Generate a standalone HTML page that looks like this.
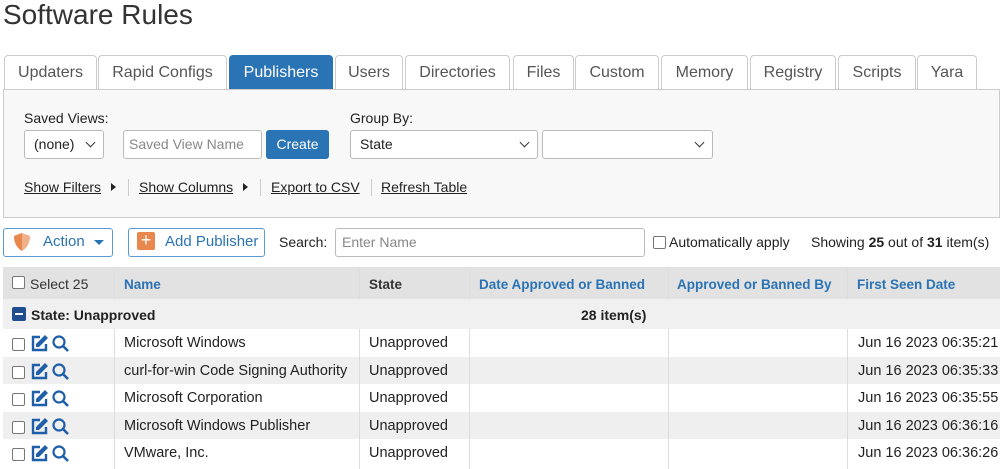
<!DOCTYPE html><html><head><style>
body{margin:0;width:1000px;height:469px;overflow:hidden;background:#fff;font-family:"Liberation Sans",sans-serif;color:#222;position:relative}
.a{position:absolute}
.tab{position:absolute;top:55px;height:33px;border:1px solid #ccc;border-bottom:none;border-radius:4px 4px 0 0;background:#fff;color:#555;font-size:16px;line-height:33px;text-align:center}
.tab.on{background:#2a73b5;color:#fff;border-color:#2a73b5}
.sel{position:absolute;height:27px;border:1px solid #bbb;border-radius:3px;background:#fff;font-size:14px;line-height:27px;padding-left:9px;box-sizing:border-box}
.sel:after{content:"";position:absolute;right:9px;top:8px;width:6px;height:6px;border-right:1.5px solid #333;border-bottom:1.5px solid #333;transform:rotate(45deg)}
.lnk{position:absolute;top:179px;font-size:14px;color:#222;text-decoration:underline}
.sep{position:absolute;top:179px;width:1px;height:17px;background:#ccc}
.row{position:absolute;left:3px;width:997px;font-size:14px}
.cb{position:absolute;width:11px;height:11px;border:1px solid #777;border-radius:2px;background:#fff}
.vl{position:absolute;width:1px;background:#ddd}
.h{position:absolute;top:277px;font-size:13.5px;font-weight:bold;color:#2a73b5;white-space:nowrap}
.t{position:absolute;top:0;font-size:14.5px;white-space:nowrap}
</style></head><body>
<div class="a" style="left:3px;top:-1px;font-size:28px;color:#333">Software Rules</div>
<div class="a" style="left:3px;top:89px;width:995px;height:127px;background:#f8f8f8;border:1px solid #ccc"></div>
<div class="tab" style="left:4px;width:91px">Updaters</div>
<div class="tab" style="left:98px;width:127px">Rapid Configs</div>
<div class="tab on" style="left:229px;width:102px">Publishers</div>
<div class="tab" style="left:335px;width:66px">Users</div>
<div class="tab" style="left:405px;width:103px">Directories</div>
<div class="tab" style="left:513px;width:59px">Files</div>
<div class="tab" style="left:575px;width:82px">Custom</div>
<div class="tab" style="left:661px;width:85px">Memory</div>
<div class="tab" style="left:750px;width:84px">Registry</div>
<div class="tab" style="left:838px;width:76px">Scripts</div>
<div class="tab" style="left:917px;width:58px">Yara</div>
<div class="a" style="left:24px;top:110px;font-size:14px">Saved Views:</div>
<div class="a" style="left:350px;top:110px;font-size:14px">Group By:</div>
<div class="sel" style="left:24px;top:130px;width:80px;height:29px;line-height:27px">(none)</div>
<div class="a" style="left:123px;top:130px;width:139px;height:29px;border:1px solid #bbb;border-radius:3px;background:#fff;box-sizing:border-box;font-size:14px;color:#888;line-height:27px;padding-left:5px">Saved View Name</div>
<div class="a" style="left:266px;top:130px;width:63px;height:29px;background:#2a73b5;border-radius:3px;color:#fff;font-size:14px;line-height:29px;text-align:center">Create</div>
<div class="sel" style="left:350px;top:130px;width:188px;height:29px">State</div>
<div class="sel" style="left:542px;top:130px;width:171px;height:29px"></div>
<div class="lnk" style="left:24px">Show Filters</div><div class="a" style="left:111px;top:183px;border-left:5px solid #222;border-top:4px solid transparent;border-bottom:4px solid transparent"></div>
<div class="sep" style="left:128px"></div>
<div class="lnk" style="left:139px">Show Columns</div><div class="a" style="left:243px;top:183px;border-left:5px solid #222;border-top:4px solid transparent;border-bottom:4px solid transparent"></div>
<div class="sep" style="left:260px"></div>
<div class="lnk" style="left:271px">Export to CSV</div>
<div class="sep" style="left:371px"></div>
<div class="lnk" style="left:381px">Refresh Table</div>
<div class="a" style="left:3px;top:228px;width:108px;height:27px;border:1px solid #5b9bd5;border-radius:3px;background:#fff"></div>
<svg class="a" style="left:12px;top:232px" width="20" height="20" viewBox="0 0 20 20"><path d="M10 1 L18 4 C18 11 15 16 10 19 C5 16 2 11 2 4 Z" fill="#f0b089"/><path d="M10 1 L2 4 C2 11 5 16 10 19 Z" fill="#e8874e"/></svg>
<div class="a" style="left:43px;top:233px;font-size:15px;color:#2a73b5">Action</div>
<div class="a" style="left:94px;top:240px;border-top:5px solid #2a73b5;border-left:5px solid transparent;border-right:5px solid transparent"></div>
<div class="a" style="left:128px;top:228px;width:135px;height:27px;border:1px solid #5b9bd5;border-radius:3px;background:#fff"></div>
<div class="a" style="left:137px;top:232px;width:18px;height:18px;background:#e8874e;border-radius:2px;color:#fff;font-size:18px;line-height:17px;text-align:center">+</div>
<div class="a" style="left:165px;top:233px;font-size:15px;color:#2a73b5">Add Publisher</div>
<div class="a" style="left:279px;top:234px;font-size:14px">Search:</div>
<div class="a" style="left:335px;top:228px;width:310px;height:29px;border:1px solid #bbb;border-radius:3px;box-sizing:border-box;font-size:14px;color:#888;line-height:27px;padding-left:6px">Enter Name</div>
<div class="cb" style="left:653px;top:236px"></div>
<div class="a" style="left:669px;top:234px;font-size:14px">Automatically apply</div>
<div class="a" style="left:811px;top:234px;font-size:14px">Showing <b>25</b> out of <b>31</b> item(s)</div>
<div class="row" style="top:267px;height:32px;background:#e2e2e2"></div>
<div class="cb" style="left:12px;top:276px"></div>
<div class="a" style="left:30px;top:276px;font-size:14px;color:#333">Select 25</div>
<div class="h" style="left:124px">Name</div>
<div class="h" style="left:369px;color:#333">State</div>
<div class="h" style="left:479px">Date Approved or Banned</div>
<div class="h" style="left:677px">Approved or Banned By</div>
<div class="h" style="left:857px">First Seen Date</div>
<div class="row" style="top:299px;height:30px;background:#f0f0f0"></div>
<div class="a" style="left:12px;top:307px;width:14px;height:14px;background:#1f4f8f;border-radius:2px"><div style="margin:6px 3px;height:2px;background:#fff"></div></div>
<div class="a" style="left:31px;top:307px;font-size:14px;font-weight:bold">State: Unapproved</div>
<div class="a" style="left:581px;top:307px;font-size:14px;font-weight:bold">28 item(s)</div>
<div class="row" style="top:357px;height:27px;background:#efefef"></div>
<div class="row" style="top:412px;height:27px;background:#efefef"></div>
<div class="vl" style="left:114px;top:267px;height:32px"></div><div class="vl" style="left:114px;top:329px;height:140px"></div>
<div class="vl" style="left:359px;top:267px;height:32px"></div><div class="vl" style="left:359px;top:329px;height:140px"></div>
<div class="vl" style="left:469px;top:267px;height:32px"></div><div class="vl" style="left:469px;top:329px;height:140px"></div>
<div class="vl" style="left:668px;top:267px;height:32px"></div><div class="vl" style="left:668px;top:329px;height:140px"></div>
<div class="vl" style="left:847px;top:267px;height:32px"></div><div class="vl" style="left:847px;top:329px;height:140px"></div>
<div class="a" style="left:0;top:329px">
<div class="a" style="top:6px"><div class="cb" style="left:12px;top:3px"></div><svg class="a" style="left:30px;top:-1px" width="42" height="19" viewBox="0 0 42 19"><path d="M10 3H3v13h13V10" fill="none" stroke="#1f5ea8" stroke-width="2.4"/><path d="M15 1l3 3-9 9H6v-3z" fill="#1f5ea8"/><circle cx="29" cy="8" r="5.5" fill="none" stroke="#1f5ea8" stroke-width="2.2"/><path d="M33 12L38 17" stroke="#1f5ea8" stroke-width="2.6"/></svg><span class="t" style="left:124px">Microsoft Windows</span><span class="t" style="left:369px">Unapproved</span><span class="t" style="left:858px">Jun 16 2023 06:35:21</span></div>
<div class="a" style="top:34px"><div class="cb" style="left:12px;top:3px"></div><svg class="a" style="left:30px;top:-1px" width="42" height="19" viewBox="0 0 42 19"><path d="M10 3H3v13h13V10" fill="none" stroke="#1f5ea8" stroke-width="2.4"/><path d="M15 1l3 3-9 9H6v-3z" fill="#1f5ea8"/><circle cx="29" cy="8" r="5.5" fill="none" stroke="#1f5ea8" stroke-width="2.2"/><path d="M33 12L38 17" stroke="#1f5ea8" stroke-width="2.6"/></svg><span class="t" style="left:124px">curl-for-win Code Signing Authority</span><span class="t" style="left:369px">Unapproved</span><span class="t" style="left:858px">Jun 16 2023 06:35:33</span></div>
<div class="a" style="top:61px"><div class="cb" style="left:12px;top:3px"></div><svg class="a" style="left:30px;top:-1px" width="42" height="19" viewBox="0 0 42 19"><path d="M10 3H3v13h13V10" fill="none" stroke="#1f5ea8" stroke-width="2.4"/><path d="M15 1l3 3-9 9H6v-3z" fill="#1f5ea8"/><circle cx="29" cy="8" r="5.5" fill="none" stroke="#1f5ea8" stroke-width="2.2"/><path d="M33 12L38 17" stroke="#1f5ea8" stroke-width="2.6"/></svg><span class="t" style="left:124px">Microsoft Corporation</span><span class="t" style="left:369px">Unapproved</span><span class="t" style="left:858px">Jun 16 2023 06:35:55</span></div>
<div class="a" style="top:89px"><div class="cb" style="left:12px;top:3px"></div><svg class="a" style="left:30px;top:-1px" width="42" height="19" viewBox="0 0 42 19"><path d="M10 3H3v13h13V10" fill="none" stroke="#1f5ea8" stroke-width="2.4"/><path d="M15 1l3 3-9 9H6v-3z" fill="#1f5ea8"/><circle cx="29" cy="8" r="5.5" fill="none" stroke="#1f5ea8" stroke-width="2.2"/><path d="M33 12L38 17" stroke="#1f5ea8" stroke-width="2.6"/></svg><span class="t" style="left:124px">Microsoft Windows Publisher</span><span class="t" style="left:369px">Unapproved</span><span class="t" style="left:858px">Jun 16 2023 06:36:16</span></div>
<div class="a" style="top:116px"><div class="cb" style="left:12px;top:3px"></div><svg class="a" style="left:30px;top:-1px" width="42" height="19" viewBox="0 0 42 19"><path d="M10 3H3v13h13V10" fill="none" stroke="#1f5ea8" stroke-width="2.4"/><path d="M15 1l3 3-9 9H6v-3z" fill="#1f5ea8"/><circle cx="29" cy="8" r="5.5" fill="none" stroke="#1f5ea8" stroke-width="2.2"/><path d="M33 12L38 17" stroke="#1f5ea8" stroke-width="2.6"/></svg><span class="t" style="left:124px">VMware, Inc.</span><span class="t" style="left:369px">Unapproved</span><span class="t" style="left:858px">Jun 16 2023 06:36:26</span></div>
</div>
</body></html>
